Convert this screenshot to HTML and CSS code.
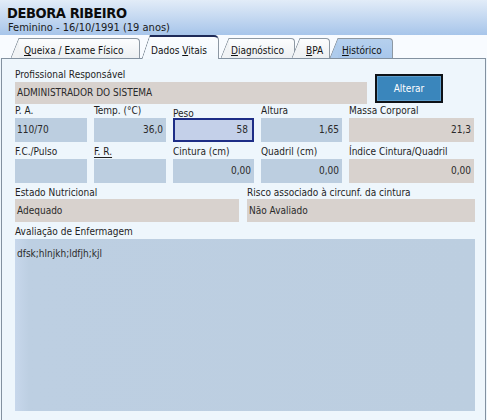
FILE: index.html
```html
<!DOCTYPE html>
<html lang="pt">
<head>
<meta charset="utf-8">
<title>Dados Vitais</title>
<link rel="stylesheet" href="styles.css">
</head>
<body>
<div class="header">
  <div class="title">DEBORA RIBEIRO</div>
  <div class="sub">Feminino - 16/10/1991 (19 anos)</div>
</div>
<div class="tabs">
  <div class="tab t1"><span class="slant"></span><span class="tb"><u>Q</u>ueixa / Exame Físico</span></div>
  <div class="tab active t2"><span class="slant"></span><span class="tb">Dados <u>V</u>itais</span></div>
  <div class="tab t3"><span class="slant"></span><span class="tb"><u>D</u>iagnóstico</span></div>
  <div class="tab t4"><span class="slant"></span><span class="tb"><u>B</u>PA</span></div>
  <div class="tab hist t5"><span class="slant"></span><span class="tb"><u>H</u>istórico</span></div>
</div>
<div class="panel">
  <div class="row r1">
    <div class="field">
      <div class="lbl">Profissional Responsável</div>
      <div class="in beige">ADMINISTRADOR DO SISTEMA</div>
    </div>
    <button class="btn">Alterar</button>
  </div>
  <div class="row r2">
    <div class="field"><div class="lbl">P. A.</div><div class="in blue">110/70</div></div>
    <div class="field"><div class="lbl">Temp. (°C)</div><div class="in blue num">36,0</div></div>
    <div class="field"><div class="lbl low">Peso</div><div class="in focus num">58</div></div>
    <div class="field"><div class="lbl">Altura</div><div class="in blue num">1,65</div></div>
    <div class="field"><div class="lbl">Massa Corporal</div><div class="in beige num">21,3</div></div>
  </div>
  <div class="row r3">
    <div class="field"><div class="lbl">F.C./Pulso</div><div class="in blue"></div></div>
    <div class="field"><div class="lbl"><span class="ul">F. R.</span></div><div class="in blue"></div></div>
    <div class="field"><div class="lbl">Cintura (cm)</div><div class="in blue num">0,00</div></div>
    <div class="field"><div class="lbl">Quadril (cm)</div><div class="in blue num">0,00</div></div>
    <div class="field"><div class="lbl">Índice Cintura/Quadril</div><div class="in beige num">0,00</div></div>
  </div>
  <div class="row r4">
    <div class="field"><div class="lbl">Estado Nutricional</div><div class="in beige">Adequado</div></div>
    <div class="field"><div class="lbl">Risco associado à circunf. da cintura</div><div class="in beige">Não Avaliado</div></div>
  </div>
  <div class="row r5">
    <div class="field">
      <div class="lbl">Avaliação de Enfermagem</div>
      <div class="area">dfsk;hlnjkh;ldfjh;kjl</div>
    </div>
  </div>
</div>
</body>
</html>
```

FILE: styles.css
```css
html, body {
  margin: 0;
  padding: 0;
  background: #eef6fc;
  overflow: hidden;
}
body {
  width: 487px;
  height: 420px;
  font-family: "DejaVu Sans Condensed", "DejaVu Sans", sans-serif;
  font-stretch: condensed;
  font-size: 10px;
  color: #1e1e1e;
}
.header {
  height: 35px;
  box-sizing: border-box;
  padding: 6px 0 0 7px;
  background: linear-gradient(#e2ecf8, #a7c5ea);
}
.title {
  font-weight: bold;
  font-size: 14.5px;
  line-height: 15px;
  letter-spacing: -0.4px;
  color: #0c0c0c;
}
.sub {
  font-size: 11px;
  line-height: 13px;
  padding-left: 1px;
  color: #1a1a1a;
}
.tabs {
  display: flex;
  align-items: flex-end;
  height: 23px;
  box-sizing: border-box;
  padding-left: 11px;
  background: #f8fbff;
}
.tab {
  display: flex;
  height: 20px;
}
.slant {
  width: 8px;
  flex: none;
  background: linear-gradient(to bottom right, transparent calc(50% - 0.7px), #8d98a3 50%, #f1f3f5 calc(50% + 0.7px));
}
.tb {
  box-sizing: border-box;
  border-top: 1px solid #8d98a3;
  border-right: 1px solid #8d98a3;
  border-top-right-radius: 4px;
  background: linear-gradient(#fcfdfe, #eceff2);
  padding-top: 5px;
  line-height: 13px;
  white-space: nowrap;
  color: #111;
}
.t1 .tb { width: 121px; padding-left: 5px; }
.t2 { margin-left: 2px; }
.t2 .tb { width: 69px; padding-left: 1px; }
.t3 { margin-left: 2px; }
.t3 .tb { width: 66px; padding-left: 2px; }
.t4 { margin-left: -3px; }
.t4 .tb { width: 30px; padding-left: 6px; }
.t5 .tb { width: 55px; padding-left: 4px; }
.tab.active {
  height: 24px;
  margin-bottom: -1px;
  position: relative;
  z-index: 1;
}
.tab.active .slant {
  background: linear-gradient(to bottom right, transparent calc(50% - 0.7px), #8d98a3 50%, #f4f9fe calc(50% + 0.7px));
}
.tab.active .tb {
  border-top: 2px solid #1f2b58;
  border-top-right-radius: 5px;
  background: linear-gradient(#fbfdff, #f0f7fd);
  padding-top: 7px;
}
.tab.hist .slant {
  background: linear-gradient(to bottom right, transparent calc(50% - 0.7px), #8d98a3 50%, #aecbec calc(50% + 0.7px));
}
.tab.hist .tb {
  background: linear-gradient(#b6d0ee, #a8c7eb);
}
.panel {
  margin-left: 1px;
  width: 485px;
  box-sizing: border-box;
  border: 1px solid #8391a0;
  background: #eef6fc;
  padding: 9px 0 20px 13px;
}
.row {
  display: grid;
}
.r1 {
  grid-template-columns: 352px 68px;
  column-gap: 8px;
  align-items: end;
}
.r2, .r3 {
  grid-template-columns: 72px 72px 81px 81px 125px;
  column-gap: 7px;
}
.r3 { margin-top: 3px; }
.r4 {
  grid-template-columns: 224px 228px;
  column-gap: 8px;
  margin-top: 3px;
}
.r5 {
  grid-template-columns: 460px;
  margin-top: 3px;
}
.lbl {
  height: 13px;
  line-height: 13px;
  white-space: nowrap;
  box-sizing: border-box;
}
.lbl.low { padding-top: 3px; }
.ul {
  text-decoration: underline;
  text-underline-offset: 2px;
}
.in {
  margin-top: 1px;
  height: 24px;
  line-height: 24px;
  box-sizing: border-box;
  padding: 0 3px 0 2px;
  color: #2a2a2a;
  white-space: nowrap;
  overflow: hidden;
}
.r1 .in { height: 22px; line-height: 22px; }
.r4 .in { margin-top: 0; height: 23px; line-height: 23px; }
.num { text-align: right; }
.blue { background: #bccee0; }
.beige { background: #d8d2ce; }
.focus {
  background: #c4d0e9;
  border: 2px solid #1d2d86;
  line-height: 20px;
  padding-right: 4px;
}
.btn {
  height: 29px;
  margin-bottom: 1px;
  border: 2px solid #0e1217;
  background: #3a86bc;
  box-shadow: inset 0 0 0 1px #5e9dcb;
  color: #ffffff;
  font-family: inherit;
  font-stretch: condensed;
  font-size: 10px;
  padding: 0;
}
.area {
  margin-top: 1px;
  height: 172px;
  box-sizing: border-box;
  padding: 8px 2px 0 2px;
  line-height: 13px;
  background: linear-gradient(to right, #c7d7eb 0, #bdcfe2 14px, #bccee0 100%);
  color: #2a2a2a;
}
```
